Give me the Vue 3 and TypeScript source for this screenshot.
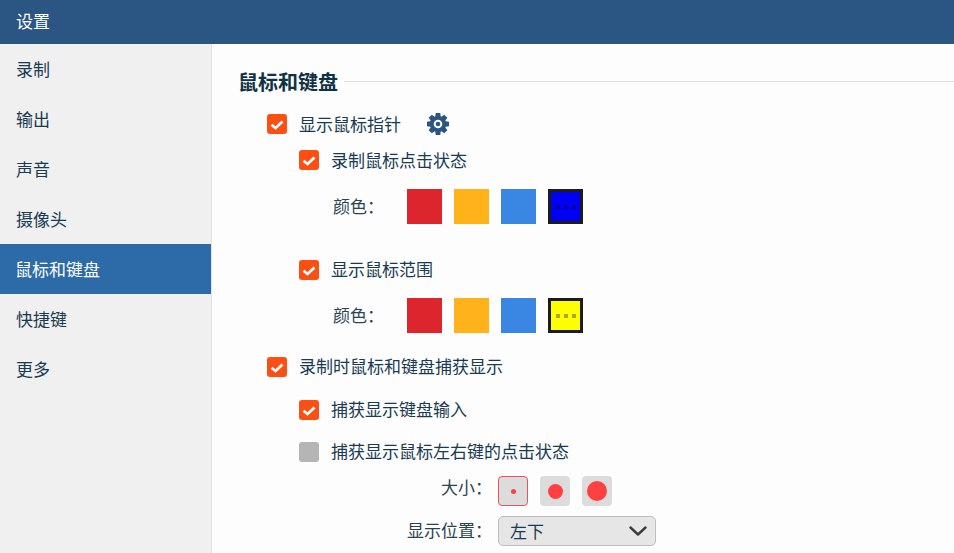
<script setup lang="ts">
const navItems = ['录制', '输出', '声音', '摄像头', '鼠标和键盘', '快捷键', '更多']
const activeNav = '鼠标和键盘'
const sizes = [
  { dot: 5, selected: true },
  { dot: 15, selected: false },
  { dot: 20, selected: false },
]
const swatchColors = ['#dd252e', '#ffb219', '#3a87e3']
const gearTeeth = [0, 45, 90, 135, 180, 225, 270, 315]
</script>

<template>
  <div class="app">
    <header class="header">设置</header>
    <div class="body">
      <nav class="side">
        <div
          v-for="item in navItems"
          :key="item"
          class="nav-item"
          :class="{ active: item === activeNav }"
        >{{ item }}</div>
      </nav>
      <main class="main">
        <div class="title-row">
          <h2 class="title">鼠标和键盘</h2>
          <div class="title-line"></div>
        </div>

        <div class="row level1 r1">
          <span class="check on"><svg viewBox="0 0 20 20"><path d="M4.500 10.800 8.500 14 15.500 7.500" /></svg></span>
          <span class="label low">显示鼠标指针</span>
          <svg class="gear" viewBox="0 0 24 24">
            <circle cx="12" cy="12" r="8" />
            <path
              v-for="a in gearTeeth"
              :key="a"
              d="M9.800 1h4.400l.8 5h-6z"
              :transform="`rotate(${a} 12 12)`"
            />
            <circle cx="12" cy="12" r="4.300" class="gear-hole" />
            <circle cx="12" cy="12" r="2.300" />
          </svg>
        </div>

        <div class="row level2 r2">
          <span class="check on"><svg viewBox="0 0 20 20"><path d="M4.500 10.800 8.500 14 15.500 7.500" /></svg></span>
          <span class="label low">录制鼠标点击状态</span>
        </div>
        <div class="color-row c1">
          <span class="color-label">颜色：</span>
          <span v-for="c in swatchColors" :key="c" class="swatch" :style="{ background: c }"></span>
          <span class="swatch custom blue"><i></i><i></i><i></i></span>
        </div>

        <div class="row level2 r3">
          <span class="check on"><svg viewBox="0 0 20 20"><path d="M4.500 10.800 8.500 14 15.500 7.500" /></svg></span>
          <span class="label">显示鼠标范围</span>
        </div>
        <div class="color-row c2">
          <span class="color-label">颜色：</span>
          <span v-for="c in swatchColors" :key="c" class="swatch" :style="{ background: c }"></span>
          <span class="swatch custom yellow"><i></i><i></i><i></i></span>
        </div>

        <div class="row level1 r4">
          <span class="check on"><svg viewBox="0 0 20 20"><path d="M4.500 10.800 8.500 14 15.500 7.500" /></svg></span>
          <span class="label">录制时鼠标和键盘捕获显示</span>
        </div>
        <div class="row level2 r5">
          <span class="check on"><svg viewBox="0 0 20 20"><path d="M4.500 10.800 8.500 14 15.500 7.500" /></svg></span>
          <span class="label">捕获显示键盘输入</span>
        </div>
        <div class="row level2 r6">
          <span class="check off"></span>
          <span class="label">捕获显示鼠标左右键的点击状态</span>
        </div>

        <div class="form-row size-row">
          <span class="form-label raised">大小：</span>
          <span
            v-for="s in sizes"
            :key="s.dot"
            class="size-btn"
            :class="{ selected: s.selected }"
          ><span class="dot" :style="{ width: s.dot + 'px', height: s.dot + 'px' }"></span></span>
        </div>
        <div class="form-row pos-row">
          <span class="form-label">显示位置：</span>
          <div class="select">
            <span>左下</span>
            <svg viewBox="0 0 18 12"><path d="M1.500 2.500 9 9.500 16.500 2.500" /></svg>
          </div>
        </div>
      </main>
    </div>
  </div>
</template>

<style scoped>
.app {
  width: 954px;
  height: 553px;
  overflow: hidden;
  display: flex;
  flex-direction: column;
  font-family: "Noto Sans CJK SC", "Noto Sans", sans-serif;
  font-size: 17px;
  color: #193a50;
  background: #fdfdfd;
}
.header {
  flex: none;
  height: 44px;
  line-height: 42px;
  padding-left: 16px;
  background: #2b5582;
  color: #fff;
}
.body {
  flex: 1;
  display: flex;
  min-height: 0;
}
.side {
  flex: none;
  width: 211px;
  background: #f0f0f0;
  border-right: 1px solid #e3e3e3;
  padding-top: 1px;
}
.nav-item {
  height: 50px;
  line-height: 48px;
  padding-left: 16px;
  color: #193a50;
}
.nav-item.active {
  background: #2d6aa8;
  color: #fff;
  margin-top: -1px;
  margin-bottom: 1px;
  line-height: 50px;
  text-indent: -1px;
}
.main {
  flex: 1;
  padding-left: 27px;
  min-width: 0;
}
.title-row {
  display: flex;
  align-items: center;
  height: 28px;
  margin-top: 25px;
}
.title {
  margin: 0 0 0 -1px;
  font-size: 20px;
  font-weight: 700;
  color: #0f3345;
  line-height: 26px;
  height: 28px;
}
.title-line {
  flex: 1;
  height: 1px;
  background: #dedede;
  margin-left: 6px;
  position: relative;
  top: -2px;
}
.row {
  display: flex;
  align-items: center;
  height: 20px;
}
.level1 { padding-left: 28px; }
.level2 { padding-left: 60px; }
.r1 { margin-top: 17px; }
.r2 { margin-top: 16px; }
.r3 { margin-top: 36px; }
.r4 { margin-top: 24px; }
.r5 { margin-top: 23px; }
.r6 { margin-top: 22px; }
.check {
  flex: none;
  width: 20px;
  height: 20px;
  border-radius: 3px;
  display: block;
}
.check svg {
  display: block;
  width: 20px;
  height: 20px;
  fill: none;
  stroke: #fff;
  stroke-width: 2.700;
}
.check.on { background: #fb4f14; }
.check.off { background: #b5b5b5; }
.label {
  margin-left: 12px;
  white-space: nowrap;
  line-height: 20px;
  padding-bottom: 2px;
  height: 20px;
}
.label.low {
  padding-bottom: 0;
}
.gear {
  width: 24px;
  height: 24px;
  margin-left: 25px;
  fill: #2b5582;
}
.gear-hole {
  fill: #fdfdfd;
}
.color-row {
  display: flex;
  align-items: center;
  height: 35px;
  padding-left: 94px;
}
.c1 { margin-top: 19px; }
.c2 { margin-top: 18px; }
.color-label {
  width: 74px;
  flex: none;
  color: #2c4252;
  line-height: 34px;
  height: 35px;
}
.swatch {
  flex: none;
  width: 35px;
  height: 35px;
  margin-right: 12px;
  box-sizing: border-box;
}
.custom {
  display: flex;
  align-items: center;
  justify-content: center;
  gap: 4px;
  border: 3px solid #1c1c1c;
}
.custom i {
  display: block;
  width: 4px;
  height: 4px;
}
.blue { background: #0000f5; }
.blue i { background: #0000a8; }
.yellow { background: #ffff00; }
.yellow i { background: #a8a800; }
.form-row {
  display: flex;
  align-items: center;
  height: 30px;
}
.size-row { margin-top: 14px; }
.pos-row { margin-top: 10px; }
.form-label {
  flex: none;
  width: 259px;
  height: 30px;
  line-height: 28px;
  padding-right: 6px;
  box-sizing: border-box;
  text-align: right;
  color: #2c4252;
}
.form-label.raised {
  line-height: 21px;
}
.size-btn {
  flex: none;
  width: 30px;
  height: 30px;
  margin-right: 12px;
  box-sizing: border-box;
  background: #dcdcdc;
  border-radius: 4px;
  display: flex;
  align-items: center;
  justify-content: center;
}
.size-btn.selected { border: 1px solid #f0505a; }
.dot {
  display: block;
  border-radius: 50%;
  background: #ff4040;
}
.select {
  flex: none;
  width: 158px;
  height: 30px;
  box-sizing: border-box;
  background: #e6e6e6;
  border: 1px solid #bdbdbd;
  border-radius: 5px;
  display: flex;
  align-items: center;
  justify-content: space-between;
  padding: 0 8px 0 11px;
  color: #193a50;
  line-height: 26px;
}
.select svg {
  width: 18px;
  height: 12px;
  fill: none;
  stroke: #3c3c3c;
  stroke-width: 2.400;
  stroke-linecap: round;
  stroke-linejoin: round;
}
</style>
